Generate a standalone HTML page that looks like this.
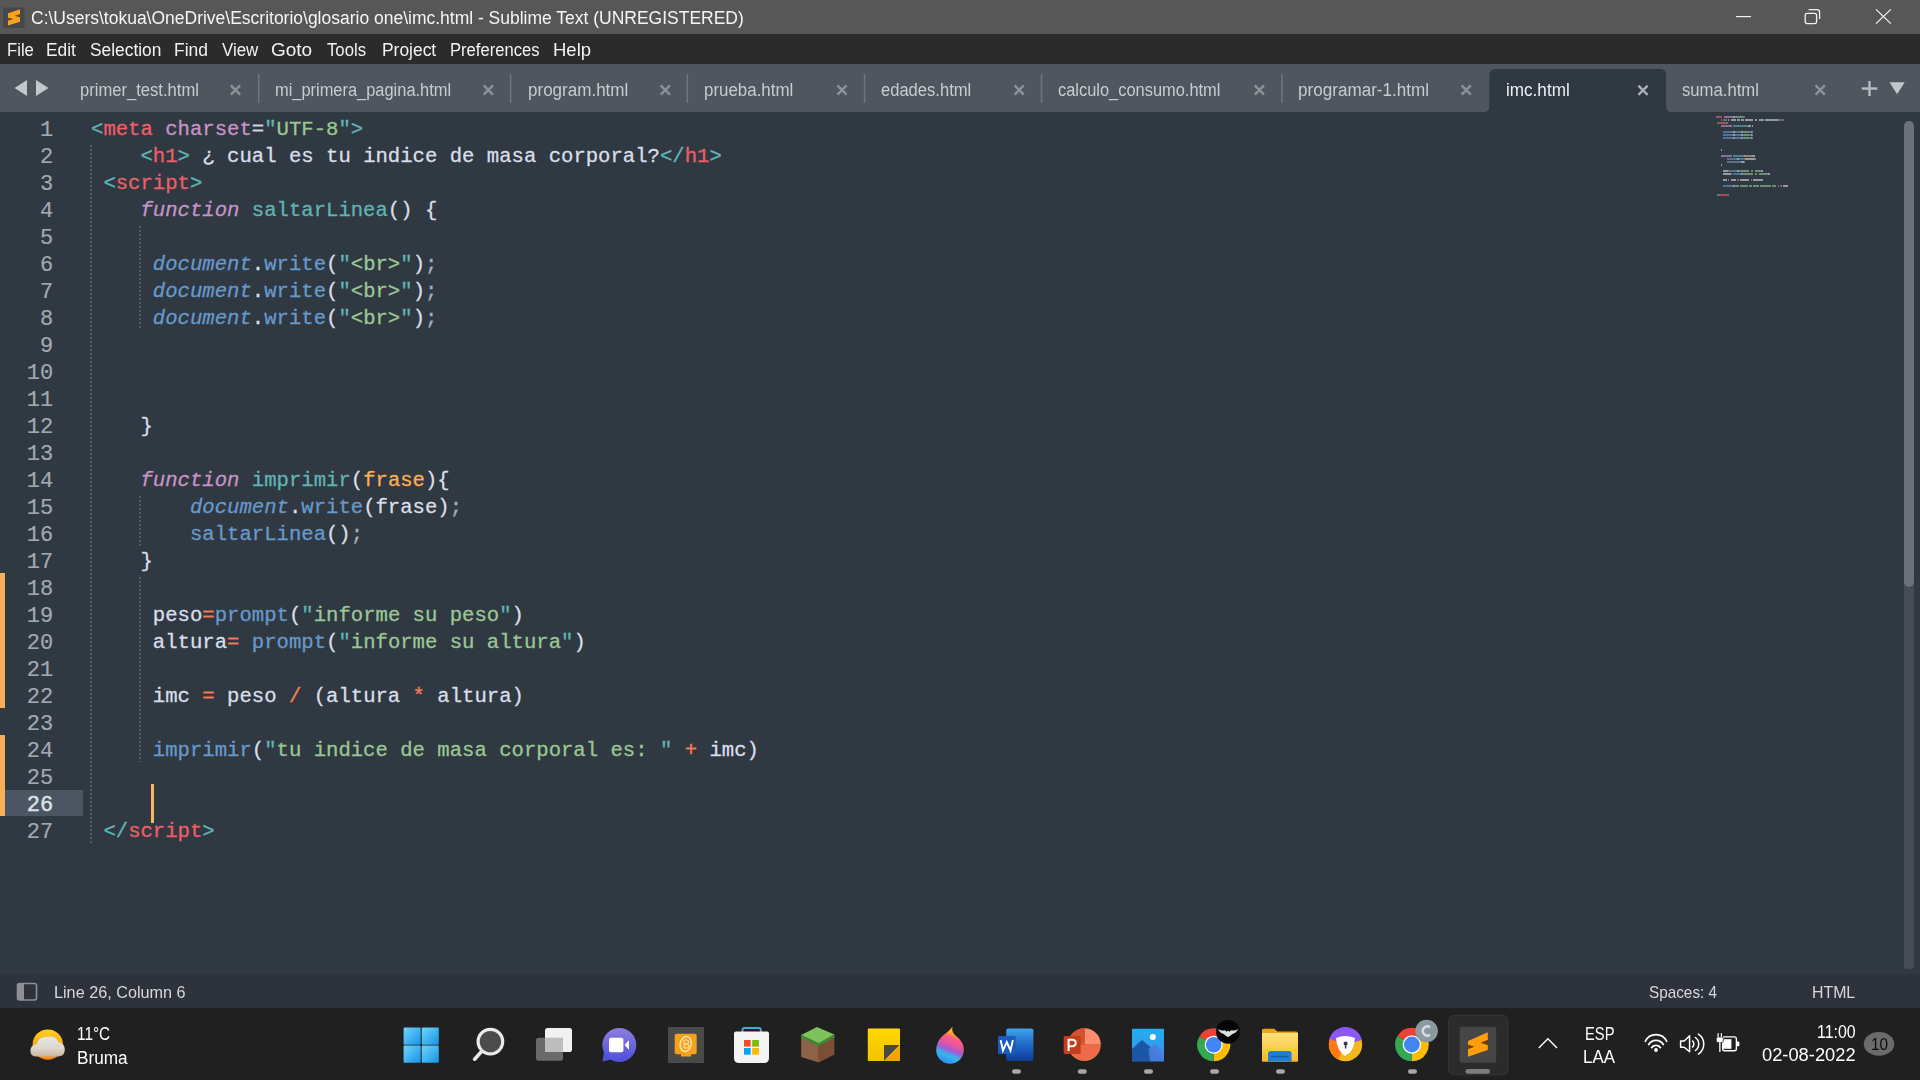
<!DOCTYPE html><html><head><meta charset="utf-8"><style>
*{margin:0;padding:0;box-sizing:border-box}
html,body{width:1920px;height:1080px;overflow:hidden;background:#303841}
body{position:relative;font-family:"Liberation Sans",sans-serif}
.a{position:absolute}
.t{position:absolute;white-space:pre;line-height:0;transform-origin:0 0}
.code{position:absolute;left:0;white-space:pre;-webkit-text-stroke:0.3px;font-family:"Liberation Mono",monospace;font-size:20.610px;line-height:27px;height:27px}
.ln{position:absolute;white-space:pre;-webkit-text-stroke:0.2px;font-family:"Liberation Mono",monospace;font-size:22.000px;line-height:27px;height:27px;text-align:right;width:60px;color:#a3a8b0}
.i{font-style:italic}
</style></head><body>
<div class="a" style="left:0;top:0;width:1920px;height:34px;background:#575757"></div>
<div class="a" style="left:0;top:34px;width:1920px;height:30px;background:#2b2b2b"></div>
<div class="a" style="left:0;top:64px;width:1920px;height:48px;background:#50565e"></div>
<div class="a" style="left:0;top:112px;width:1920px;height:862px;background:#303841"></div>
<div class="a" style="left:0;top:974px;width:1920px;height:34px;background:#2e323b"></div>
<div class="a" style="left:0;top:1008px;width:1920px;height:72px;background:#202020"></div>
<svg class="a" style="left:0;top:0" width="34" height="34" viewBox="0 0 34 34">
<rect x="3" y="7.5" width="21.5" height="20.5" rx="1" fill="#45474d"/>
<polygon points="8,13.2 20,9.2 20,14.2 15,15.8 20,17.2 20,21.8 8,25.5 8,20.5 13,19 8,17.8" fill="#f7a21b"/>
<polygon points="8,17.8 13,19 8,20.5" fill="#7a4a10"/>
<polygon points="15,15.8 20,14.2 20,17.2" fill="#7a4a10"/>
</svg>
<svg class="a" style="left:1720px;top:0" width="200" height="34" viewBox="1720 0 200 34">
<rect x="1736" y="16" width="15" height="1.2" fill="#f0f0f0"/>
<rect x="1805.2" y="13.4" width="11.4" height="10.2" rx="2" fill="none" stroke="#f0f0f0" stroke-width="1.3"/>
<path d="M1808.6 9.6 H1817 a2.6 2.6 0 0 1 2.6 2.6 V19" fill="none" stroke="#f0f0f0" stroke-width="1.3"/>
<path d="M1876 9.4 L1890.8 23.6 M1890.8 9.4 L1876 23.6" stroke="#f0f0f0" stroke-width="1.3"/>
</svg>
<svg class="a" style="left:0;top:64px" width="60" height="48" viewBox="0 64 60 48">
<polygon points="14.5,88 27,80 27,96" fill="#c3c7cc"/>
<polygon points="36,80 48.5,88 36,96" fill="#c3c7cc"/>
</svg>
<svg class="a" style="left:1478px;top:64px" width="200" height="48" viewBox="1478 64 200 48">
<path d="M1483.5 112 Q1489.4 112 1489.4 106 V75 Q1489.4 69 1495.4 69 H1660.1 Q1666.1 69 1666.1 75 V106 Q1666.1 112 1672.1 112 Z" fill="#303841"/>
</svg>
<svg class="a" style="left:0;top:64px" width="1920" height="48" viewBox="0 64 1920 48">
<path d="M230.9 85.4 L240.1 94.6 M240.1 85.4 L230.9 94.6" stroke="#8d9298" stroke-width="2.4" stroke-linecap="butt"/>
<path d="M483.7 85.4 L492.9 94.6 M492.9 85.4 L483.7 94.6" stroke="#8d9298" stroke-width="2.4" stroke-linecap="butt"/>
<path d="M660.7 85.4 L669.9 94.6 M669.9 85.4 L660.7 94.6" stroke="#8d9298" stroke-width="2.4" stroke-linecap="butt"/>
<path d="M837.4 85.4 L846.6 94.6 M846.6 85.4 L837.4 94.6" stroke="#8d9298" stroke-width="2.4" stroke-linecap="butt"/>
<path d="M1014.6 85.4 L1023.8 94.6 M1023.8 85.4 L1014.6 94.6" stroke="#8d9298" stroke-width="2.4" stroke-linecap="butt"/>
<path d="M1254.8 85.4 L1264.0 94.6 M1264.0 85.4 L1254.8 94.6" stroke="#8d9298" stroke-width="2.4" stroke-linecap="butt"/>
<path d="M1461.6 85.4 L1470.8 94.6 M1470.8 85.4 L1461.6 94.6" stroke="#8d9298" stroke-width="2.4" stroke-linecap="butt"/>
<path d="M1638.4 85.6 L1647.6 94.8 M1647.6 85.6 L1638.4 94.8" stroke="#a9aeb3" stroke-width="2.4" stroke-linecap="butt"/>
<path d="M1815.6 85.4 L1824.8 94.6 M1824.8 85.4 L1815.6 94.6" stroke="#8d9298" stroke-width="2.4" stroke-linecap="butt"/>
<rect x="257.9" y="74" width="1.6" height="29" fill="#6e747b"/>
<rect x="509.8" y="74" width="1.6" height="29" fill="#6e747b"/>
<rect x="686.5" y="74" width="1.6" height="29" fill="#6e747b"/>
<rect x="863.8" y="74" width="1.6" height="29" fill="#6e747b"/>
<rect x="1040.7" y="74" width="1.6" height="29" fill="#6e747b"/>
<rect x="1281.1" y="74" width="1.6" height="29" fill="#6e747b"/>
<rect x="1861.8" y="87.3" width="15.5" height="2.4" fill="#b8bcc1"/>
<rect x="1868.3" y="81" width="2.4" height="15" fill="#b8bcc1"/>
<polygon points="1889.5,82.3 1904.7,82.3 1897.1,94.2" fill="#c3c7cc"/>
</svg>
<svg class="a" style="left:0;top:974px" width="50" height="34" viewBox="0 974 50 34">
<rect x="17.5" y="983.5" width="19" height="16.5" rx="2" fill="none" stroke="#8c9096" stroke-width="1.6"/>
<rect x="17.5" y="983.5" width="6.5" height="16.5" fill="#8c9096"/>
</svg><svg class="a" style="left:0;top:1008px" width="1920" height="72" viewBox="0 1008 1920 72">
<defs>
<linearGradient id="gwin" x1="0" y1="0" x2="1" y2="1"><stop offset="0" stop-color="#6fd6fb"/><stop offset="1" stop-color="#1592e6"/></linearGradient>
<linearGradient id="gsun" x1="0" y1="0" x2="0" y2="1"><stop offset="0" stop-color="#ffd21f"/><stop offset=".5" stop-color="#f9a81a"/><stop offset="1" stop-color="#f08a1c"/></linearGradient>
<linearGradient id="gcloud" x1="0" y1="0" x2="0" y2="1"><stop offset="0" stop-color="#e4e8e6"/><stop offset=".6" stop-color="#dcd6cc"/><stop offset="1" stop-color="#c9b59c"/></linearGradient>
<linearGradient id="gchat" x1="0" y1="0" x2="0" y2="1"><stop offset="0" stop-color="#8c7fdc"/><stop offset="1" stop-color="#4c4fdc"/></linearGradient>
<linearGradient id="gpaint" x1=".65" y1=".02" x2=".35" y2=".98"><stop offset="0" stop-color="#ffc21a"/><stop offset=".16" stop-color="#ffb020"/><stop offset=".3" stop-color="#ff5a8a"/><stop offset=".48" stop-color="#e2559e"/><stop offset=".62" stop-color="#a15ad8"/><stop offset=".78" stop-color="#36b8ea"/><stop offset="1" stop-color="#2a8ff0"/></linearGradient>
<linearGradient id="gword" x1="0" y1="0" x2="0" y2="1"><stop offset="0" stop-color="#41a5ee"/><stop offset=".33" stop-color="#2b7cd3"/><stop offset=".66" stop-color="#185abd"/><stop offset="1" stop-color="#103f91"/></linearGradient>
<linearGradient id="gsky" x1="0" y1="0" x2="0" y2="1"><stop offset="0" stop-color="#22aef2"/><stop offset="1" stop-color="#3d8fe6"/></linearGradient>
<linearGradient id="gfold" x1="0" y1="0" x2="0" y2="1"><stop offset="0" stop-color="#ffe27a"/><stop offset="1" stop-color="#f7b92d"/></linearGradient>
<linearGradient id="gstick" x1="0" y1="0" x2="0" y2="1"><stop offset="0" stop-color="#ffd900"/><stop offset="1" stop-color="#f4c000"/></linearGradient>
</defs>
<circle cx="47.8" cy="1044.6" r="15.2" fill="url(#gsun)"/>
<path d="M30.5 1051.5 Q30 1045 36.5 1044.2 Q38.5 1036.5 47.5 1036.8 Q55 1035.5 58.5 1042 Q64.8 1043 64.8 1050 Q64.5 1056.5 58 1056.5 L36.5 1056.5 Q30.8 1056.5 30.5 1051.5 Z" fill="url(#gcloud)"/>
<rect x="403.6" y="1027.6" width="17.1" height="17.1" rx="1" fill="url(#gwin)"/>
<rect x="421.7" y="1027.6" width="17.1" height="17.1" rx="1" fill="url(#gwin)"/>
<rect x="403.6" y="1045.6" width="17.1" height="17.1" rx="1" fill="url(#gwin)"/>
<rect x="421.7" y="1045.6" width="17.1" height="17.1" rx="1" fill="url(#gwin)"/>
<circle cx="490.4" cy="1041.6" r="12.3" fill="#4b4b4b" stroke="#e9e9e9" stroke-width="3.2"/>
<line x1="474.6" y1="1059.2" x2="481.4" y2="1051.6" stroke="#e9e9e9" stroke-width="3.6" stroke-linecap="round"/>
<rect x="536" y="1037.7" width="27" height="23" rx="2.5" fill="#6a6a6a"/>
<rect x="545" y="1028" width="27" height="24" rx="2.5" fill="#f1f1f1"/>
<rect x="545" y="1037.7" width="18" height="14.3" fill="#bdbdbd"/>
<circle cx="619.3" cy="1045" r="17" fill="url(#gchat)"/>
<path d="M604 1052 L602.5 1061.5 L613 1059 Z" fill="#5055d8"/>
<rect x="609" y="1037.8" width="14.4" height="14.4" rx="2" fill="#ffffff"/>
<polygon points="624.5,1045 629,1040.3 629,1049.7" fill="#ffffff"/>
<rect x="668" y="1027" width="36" height="36" fill="#4a4a4a"/>
<rect x="674.7" y="1033.7" width="22" height="20.6" rx="2" fill="#f3a21d"/>
<rect x="681" y="1053" width="10" height="3.5" fill="#f3a21d"/>
<ellipse cx="685.7" cy="1044" rx="5.5" ry="7.5" fill="none" stroke="#ffe6b0" stroke-width="1.4" transform="rotate(12 685.7 1044)"/>
<path d="M684 1040 V1048 H687 A2 2 0 0 0 687 1044 H684 M684 1044 H686.6 A2 2 0 0 0 686.6 1040 H684" fill="none" stroke="#ffe6b0" stroke-width="1"/>
<path d="M742.5 1035 V1030 Q742.5 1028 744.5 1028 H758.8 Q760.8 1028 760.8 1030 V1035" fill="none" stroke="#4aa6d6" stroke-width="2"/>
<path d="M734 1033.6 Q734 1031.6 736 1031.6 H767 Q769 1031.6 769 1033.6 V1058 Q769 1063 764 1063 H739 Q734 1063 734 1058 Z" fill="#f3f3f3"/>
<rect x="744" y="1040" width="6.6" height="6.6" fill="#f25022"/>
<rect x="752.2" y="1040" width="6.7" height="6.6" fill="#7fba00"/>
<rect x="744" y="1048" width="6.6" height="6.7" fill="#00a4ef"/>
<rect x="752.2" y="1048" width="6.7" height="6.7" fill="#ffb900"/>
<polygon points="801.2,1035.1 801.2,1057 818.8,1062.6 818.8,1043.3" fill="#8d6246"/>
<polygon points="818.8,1043.3 818.8,1062.6 834.4,1054.5 834.4,1034.5" fill="#7a4f35"/>
<polygon points="801.2,1035.1 816.9,1027 834.4,1034.5 818.8,1043.3" fill="#7dc25a"/>
<polygon points="801.2,1035.1 818.8,1043.3 834.4,1034.5 834.4,1037.5 818.8,1046 801.2,1038" fill="#3d8a33"/>
<rect x="867.8" y="1028.6" width="32.2" height="32.4" rx="1" fill="url(#gstick)"/>
<polygon points="884,1045 899.5,1045 884,1060.8" fill="#484848"/>
<polygon points="899.8,1045.5 899.8,1061 884.5,1061" fill="#f0a500"/>
<path d="M952.5 1026.6 Q951 1032 956 1036 Q964 1042 963.8 1050 A13.8 13.8 0 0 1 936.2 1050 Q936.5 1041 943 1035.5 Q950 1030.5 952.5 1026.6 Z" fill="url(#gpaint)"/>
<rect x="1006.2" y="1028.4" width="27.2" height="32.6" rx="2" fill="url(#gword)"/>
<rect x="998" y="1036" width="17.6" height="18" rx="1.2" fill="#185abd"/>
<path d="M1000.6 1040 L1003 1050.5 L1006.8 1042 L1010.5 1050.5 L1012.9 1040" fill="none" stroke="#ffffff" stroke-width="1.9" stroke-linejoin="miter"/>
<path d="M1084.4 1044.7 L1084.4 1028.3 A16.4 16.4 0 0 1 1100.8 1044.7 Z" fill="#ff8f6b"/>
<path d="M1084.4 1044.7 L1100.8 1044.7 A16.4 16.4 0 0 1 1068 1044.7 A16.4 16.4 0 0 1 1084.4 1028.3 Z" fill="#ed6c47"/>
<path d="M1084.4 1028.3 A16.4 16.4 0 0 0 1068 1044.7 L1084.4 1044.7 Z" fill="#d35230"/>
<rect x="1063.7" y="1036" width="17" height="18" rx="1.2" fill="#c43e1c"/>
<path d="M1068.6 1051 V1039.8 H1072.6 A3.2 3.2 0 0 1 1072.6 1046.2 H1068.6" fill="none" stroke="#ffffff" stroke-width="2"/>
<rect x="1132" y="1028.7" width="32" height="32.6" rx="1" fill="url(#gsky)"/>
<polygon points="1142,1040 1132,1049 1132,1061.3 1164,1061.3 1156,1052" fill="#1d56a6"/>
<polygon points="1155,1044 1164,1052 1164,1061.3 1150,1061.3 1148.5,1049" fill="#4a7fe0" opacity=".9"/>
<circle cx="1152.8" cy="1036.9" r="3" fill="#ffffff"/>
<path d="M1213.70 1044.70 L1199.41 1036.45 A16.50 16.50 0 0 1 1227.99 1036.45 Z" fill="#ea4335"/>
<path d="M1213.70 1044.70 L1227.99 1036.45 A16.50 16.50 0 0 1 1213.70 1061.20 Z" fill="#fbbc04"/>
<path d="M1213.70 1044.70 L1213.70 1061.20 A16.50 16.50 0 0 1 1199.41 1036.45 Z" fill="#34a853"/>
<circle cx="1213.70" cy="1044.70" r="9.05" fill="#ffffff"/>
<circle cx="1213.70" cy="1044.70" r="7.75" fill="#4285f4"/>
<circle cx="1228" cy="1031.9" r="11.9" fill="#050505"/>
<path d="M1217.8 1029 Q1222 1031.2 1224.8 1030.2 L1226.6 1031.8 L1228 1030.6 L1229.4 1031.8 L1231.2 1030.2 Q1234 1031.2 1238.4 1029 Q1236 1033.2 1232.8 1033.8 L1228 1037.2 L1223.2 1033.8 Q1220 1033.2 1217.8 1029 Z" fill="#e0e0e0"/>
<path d="M1262 1030.5 Q1262 1028.7 1263.8 1028.7 H1274 L1277.5 1031.5 H1296 Q1298 1031.5 1298 1033.5 V1061.6 H1262 Z" fill="#e9a61a"/>
<rect x="1262" y="1033" width="36" height="28.6" rx="1" fill="url(#gfold)"/>
<path d="M1268 1061.6 V1053.5 Q1268 1051 1270.5 1051 H1289 Q1291.6 1051 1291.6 1053.5 V1061.6 Z" fill="#1f7fd6"/>
<rect x="1271" y="1055.8" width="17.6" height="1.6" fill="#0f5fae"/>
<circle cx="1345.5" cy="1044.5" r="16.7" fill="#f5b81c"/>
<path d="M1345.5 1044.5 L1329 1041 A16.7 16.7 0 0 1 1361.8 1040 Z" fill="#8b57f5"/>
<path d="M1345.5 1044.5 L1330 1039 A16.7 16.7 0 0 0 1338 1059.5 Z" fill="#ff7a12"/>
<path d="M1336 1038 Q1345 1034 1355 1038 Q1354 1052 1345 1056 Q1337 1051 1336 1038 Z" fill="#ffffff"/>
<circle cx="1345.6" cy="1043.5" r="2" fill="#3a3a5a"/><rect x="1344.8" y="1044" width="1.6" height="4.5" fill="#3a3a5a"/>
<path d="M1411.90 1044.50 L1397.35 1036.10 A16.80 16.80 0 0 1 1426.45 1036.10 Z" fill="#ea4335"/>
<path d="M1411.90 1044.50 L1426.45 1036.10 A16.80 16.80 0 0 1 1411.90 1061.30 Z" fill="#fbbc04"/>
<path d="M1411.90 1044.50 L1411.90 1061.30 A16.80 16.80 0 0 1 1397.35 1036.10 Z" fill="#34a853"/>
<circle cx="1411.90" cy="1044.50" r="9.20" fill="#ffffff"/>
<circle cx="1411.90" cy="1044.50" r="7.90" fill="#4285f4"/>
<circle cx="1426.6" cy="1031" r="11.3" fill="#8b99a1"/>
<path d="M1430 1027.2 A4.6 4.6 0 1 0 1430 1034.8" fill="none" stroke="#d5e0e5" stroke-width="2.4"/>
<rect x="1448.5" y="1015.3" width="59.5" height="59.5" rx="5" fill="#2b2b2b" stroke="#353535" stroke-width="1"/>
<rect x="1459.7" y="1026.8" width="36.5" height="36" rx="2" fill="#464646"/>
<polygon points="1468,1041 1487.8,1032.2 1487.8,1040 1481,1042.8 1487.8,1045 1487.8,1050 1468,1056.7 1468,1049 1474,1046.8 1468,1044.8" fill="#ff9d0a"/>
<polygon points="1468,1044.8 1474,1046.8 1468,1049" fill="#6a3f08"/>
<polygon points="1481,1042.8 1487.8,1040 1487.8,1045" fill="#6a3f08"/>
<rect x="1465.5" y="1069" width="24.5" height="4.8" rx="2.4" fill="#7d7d7d"/>
<rect x="1012.0" y="1069.2" width="9" height="4.6" rx="2.3" fill="#a8a8a8"/>
<rect x="1077.8" y="1069.2" width="9" height="4.6" rx="2.3" fill="#a8a8a8"/>
<rect x="1144.0" y="1069.2" width="9" height="4.6" rx="2.3" fill="#a8a8a8"/>
<rect x="1210.0" y="1069.2" width="9" height="4.6" rx="2.3" fill="#a8a8a8"/>
<rect x="1276.0" y="1069.2" width="9" height="4.6" rx="2.3" fill="#a8a8a8"/>
<rect x="1408.0" y="1069.2" width="9" height="4.6" rx="2.3" fill="#a8a8a8"/>
<polyline points="1538.8,1047.9 1547.9,1038.8 1557,1047.9" fill="none" stroke="#ffffff" stroke-width="1.4"/>
<path d="M1645.3 1041.3 A11.9 11.9 0 0 1 1666.7 1041.3" fill="none" stroke="#ffffff" stroke-width="1.7" stroke-linecap="round"/>
<path d="M1648.6 1044.6 A8.6 8.6 0 0 1 1663.4 1044.6" fill="none" stroke="#ffffff" stroke-width="1.7" stroke-linecap="round"/>
<path d="M1651.6 1047.6 A5.6 5.6 0 0 1 1660.4 1047.6" fill="none" stroke="#ffffff" stroke-width="1.7" stroke-linecap="round"/>
<circle cx="1656" cy="1050" r="1.9" fill="#ffffff"/>
<path d="M1680.6 1041 H1684.2 L1689.6 1035.8 V1051.8 L1684.2 1047.2 H1680.6 Z" fill="none" stroke="#ffffff" stroke-width="1.5" stroke-linejoin="round"/>
<path d="M1692.6 1041 A4.2 4.2 0 0 1 1692.6 1047" fill="none" stroke="#ffffff" stroke-width="1.5" stroke-linecap="round"/>
<path d="M1695.4 1037.5 A8 8 0 0 1 1695.4 1050.5" fill="none" stroke="#ffffff" stroke-width="1.5" stroke-linecap="round"/>
<path d="M1698.4 1034 A12 12 0 0 1 1698.4 1054" fill="none" stroke="#ffffff" stroke-width="1.5" stroke-linecap="round"/>
<rect x="1722.6" y="1036.9" width="13.8" height="13.8" rx="2" fill="none" stroke="#ffffff" stroke-width="1.4"/>
<rect x="1736.4" y="1041.6" width="3" height="4.6" rx="1" fill="#ffffff"/>
<rect x="1723" y="1039.2" width="8.4" height="9.6" fill="#ffffff"/>
<rect x="1716.3" y="1037" width="7" height="5.5" rx="1.5" fill="#ffffff" stroke="#202020" stroke-width="0.8"/>
<rect x="1717.5" y="1033.2" width="1.2" height="4" fill="#ffffff"/><rect x="1720.8" y="1033.2" width="1.2" height="4" fill="#ffffff"/>
<rect x="1719.2" y="1042" width="1.3" height="10" fill="#ffffff"/>
<ellipse cx="1879" cy="1043.9" rx="15.2" ry="11.9" fill="#6b6b6b"/>
</svg>
<div class="t" style="left:31.03px;top:18.20px;font-size:18.00px;color:#f4f4f4;transform:scaleX(0.9713)">C:\Users\tokua\OneDrive\Escritorio\glosario one\imc.html - Sublime Text (UNREGISTERED)</div>
<div class="t" style="left:6.87px;top:49.50px;font-size:18.00px;color:#f2f2f2;transform:scaleX(0.9259)">File</div>
<div class="t" style="left:45.94px;top:49.50px;font-size:18.00px;color:#f2f2f2;transform:scaleX(0.9633)">Edit</div>
<div class="t" style="left:89.64px;top:49.50px;font-size:18.00px;color:#f2f2f2;transform:scaleX(0.9639)">Selection</div>
<div class="t" style="left:174.03px;top:49.50px;font-size:18.00px;color:#f2f2f2;transform:scaleX(0.9697)">Find</div>
<div class="t" style="left:222.00px;top:49.50px;font-size:18.00px;color:#f2f2f2;transform:scaleX(0.9385)">View</div>
<div class="t" style="left:271.35px;top:49.50px;font-size:18.00px;color:#f2f2f2;transform:scaleX(1.0541)">Goto</div>
<div class="t" style="left:327.30px;top:49.50px;font-size:18.00px;color:#f2f2f2;transform:scaleX(0.9286)">Tools</div>
<div class="t" style="left:382.03px;top:49.50px;font-size:18.00px;color:#f2f2f2;transform:scaleX(0.9673)">Project</div>
<div class="t" style="left:449.98px;top:49.50px;font-size:18.00px;color:#f2f2f2;transform:scaleX(0.9219)">Preferences</div>
<div class="t" style="left:553.27px;top:49.50px;font-size:18.00px;color:#f2f2f2;transform:scaleX(1.0286)">Help</div>
<div class="t" style="left:79.58px;top:90.00px;font-size:18.00px;color:#c8ccd1;transform:scaleX(0.9213)">primer_test.html</div>
<div class="t" style="left:275.29px;top:90.00px;font-size:18.00px;color:#c8ccd1;transform:scaleX(0.9120)">mi_primera_pagina.html</div>
<div class="t" style="left:527.95px;top:90.00px;font-size:18.00px;color:#c8ccd1;transform:scaleX(0.9462)">program.html</div>
<div class="t" style="left:704.26px;top:90.00px;font-size:18.00px;color:#c8ccd1;transform:scaleX(0.9398)">prueba.html</div>
<div class="t" style="left:881.28px;top:90.00px;font-size:18.00px;color:#c8ccd1;transform:scaleX(0.9198)">edades.html</div>
<div class="t" style="left:1058.09px;top:90.00px;font-size:18.00px;color:#c8ccd1;transform:scaleX(0.9119)">calculo_consumo.html</div>
<div class="t" style="left:1298.25px;top:90.00px;font-size:18.00px;color:#c8ccd1;transform:scaleX(0.9493)">programar-1.html</div>
<div class="t" style="left:1505.55px;top:90.00px;font-size:18.00px;color:#eef0f3;transform:scaleX(0.9508)">imc.html</div>
<div class="t" style="left:1682.37px;top:90.00px;font-size:18.00px;color:#c8ccd1;transform:scaleX(0.9259)">suma.html</div>
<div class="t" style="left:53.75px;top:993.00px;font-size:17.00px;color:#d4d7db;transform:scaleX(0.9537)">Line 26, Column 6</div>
<div class="t" style="left:1648.60px;top:993.00px;font-size:17.00px;color:#d4d7db;transform:scaleX(0.9000)">Spaces: 4</div>
<div class="t" style="left:1812.07px;top:993.00px;font-size:17.00px;color:#d4d7db;transform:scaleX(0.9333)">HTML</div>
<div class="t" style="left:77.03px;top:1033.80px;font-size:17.50px;color:#ffffff;transform:scaleX(0.8750)">11°C</div>
<div class="t" style="left:76.92px;top:1057.80px;font-size:17.50px;color:#ffffff;transform:scaleX(0.9824)">Bruma</div>
<div class="t" style="left:1584.66px;top:1033.80px;font-size:17.50px;color:#ffffff;transform:scaleX(0.8424)">ESP</div>
<div class="t" style="left:1583.43px;top:1056.80px;font-size:17.50px;color:#ffffff;transform:scaleX(0.9656)">LAA</div>
<div class="t" style="left:1816.79px;top:1032.40px;font-size:17.50px;color:#ffffff;transform:scaleX(0.9098)">11:00</div>
<div class="t" style="left:1761.95px;top:1055.40px;font-size:17.50px;color:#ffffff;transform:scaleX(1.0455)">02-08-2022</div>
<div class="t" style="left:1870.74px;top:1044.60px;font-size:16.00px;color:#0c0c0c;transform:scaleX(0.9562)">10</div>
<div class="a" style="left:0;top:573px;width:5px;height:135px;background:#f9ae58"></div>
<div class="a" style="left:0;top:735px;width:5px;height:81px;background:#f9ae58"></div>
<div class="a" style="left:5px;top:790px;width:78px;height:26px;background:#4b5662"></div>
<div class="ln" style="left:-6.80px;top:117.00px;color:#a3a8b0;">1</div>
<div class="ln" style="left:-6.80px;top:144.00px;color:#a3a8b0;">2</div>
<div class="ln" style="left:-6.80px;top:171.00px;color:#a3a8b0;">3</div>
<div class="ln" style="left:-6.80px;top:198.00px;color:#a3a8b0;">4</div>
<div class="ln" style="left:-6.80px;top:225.00px;color:#a3a8b0;">5</div>
<div class="ln" style="left:-6.80px;top:252.00px;color:#a3a8b0;">6</div>
<div class="ln" style="left:-6.80px;top:279.00px;color:#a3a8b0;">7</div>
<div class="ln" style="left:-6.80px;top:306.00px;color:#a3a8b0;">8</div>
<div class="ln" style="left:-6.80px;top:333.00px;color:#a3a8b0;">9</div>
<div class="ln" style="left:-6.80px;top:360.00px;color:#a3a8b0;">10</div>
<div class="ln" style="left:-6.80px;top:387.00px;color:#a3a8b0;">11</div>
<div class="ln" style="left:-6.80px;top:414.00px;color:#a3a8b0;">12</div>
<div class="ln" style="left:-6.80px;top:441.00px;color:#a3a8b0;">13</div>
<div class="ln" style="left:-6.80px;top:468.00px;color:#a3a8b0;">14</div>
<div class="ln" style="left:-6.80px;top:495.00px;color:#a3a8b0;">15</div>
<div class="ln" style="left:-6.80px;top:522.00px;color:#a3a8b0;">16</div>
<div class="ln" style="left:-6.80px;top:549.00px;color:#a3a8b0;">17</div>
<div class="ln" style="left:-6.80px;top:576.00px;color:#a3a8b0;">18</div>
<div class="ln" style="left:-6.80px;top:603.00px;color:#a3a8b0;">19</div>
<div class="ln" style="left:-6.80px;top:630.00px;color:#a3a8b0;">20</div>
<div class="ln" style="left:-6.80px;top:657.00px;color:#a3a8b0;">21</div>
<div class="ln" style="left:-6.80px;top:684.00px;color:#a3a8b0;">22</div>
<div class="ln" style="left:-6.80px;top:711.00px;color:#a3a8b0;">23</div>
<div class="ln" style="left:-6.80px;top:738.00px;color:#a3a8b0;">24</div>
<div class="ln" style="left:-6.80px;top:765.00px;color:#a3a8b0;">25</div>
<div class="ln" style="left:-6.80px;top:792.00px;color:#dde1e6;-webkit-text-stroke:0.45px;">26</div>
<div class="ln" style="left:-6.80px;top:819.00px;color:#a3a8b0;">27</div>
<div class="a" style="left:90px;top:145px;width:2px;height:698px;background:repeating-linear-gradient(to bottom,#535b66 0,#535b66 2px,transparent 2px,transparent 4px)"></div>
<div class="a" style="left:139px;top:226px;width:2px;height:104px;background:repeating-linear-gradient(to bottom,#535b66 0,#535b66 2px,transparent 2px,transparent 4px)"></div>
<div class="a" style="left:139px;top:496px;width:2px;height:50px;background:repeating-linear-gradient(to bottom,#535b66 0,#535b66 2px,transparent 2px,transparent 4px)"></div>
<div class="a" style="left:139px;top:577px;width:2px;height:185px;background:repeating-linear-gradient(to bottom,#535b66 0,#535b66 2px,transparent 2px,transparent 4px)"></div>
<div class="code" style="left:91.00px;top:115.66px"><span style="color:#5fb4b4">&lt;</span><span style="color:#ec5f67">meta</span><span style="color:#d8dee9"> </span><span style="color:#c594c5">charset</span><span style="color:#d8dee9">=</span><span style="color:#5fb4b4">&quot;</span><span style="color:#99c794">UTF-8</span><span style="color:#5fb4b4">&quot;</span><span style="color:#5fb4b4">&gt;</span></div>
<div class="code" style="left:91.00px;top:142.66px"><span style="color:#d8dee9">    </span><span style="color:#5fb4b4">&lt;</span><span style="color:#ec5f67">h1</span><span style="color:#5fb4b4">&gt;</span><span style="color:#d8dee9"> ¿ cual es tu indice de masa corporal?</span><span style="color:#5fb4b4">&lt;/</span><span style="color:#ec5f67">h1</span><span style="color:#5fb4b4">&gt;</span></div>
<div class="code" style="left:91.00px;top:169.66px"><span style="color:#d8dee9"> </span><span style="color:#5fb4b4">&lt;</span><span style="color:#ec5f67">script</span><span style="color:#5fb4b4">&gt;</span></div>
<div class="code" style="left:91.00px;top:196.66px"><span style="color:#d8dee9">    </span><span style="color:#c594c5" class="i">function</span><span style="color:#d8dee9"> </span><span style="color:#5fb4b4">saltarLinea</span><span style="color:#d8dee9">() {</span></div>
<div class="code" style="left:91.00px;top:223.66px"></div>
<div class="code" style="left:91.00px;top:250.66px"><span style="color:#d8dee9">     </span><span style="color:#6699cc" class="i">document</span><span style="color:#d8dee9">.</span><span style="color:#6699cc">write</span><span style="color:#d8dee9">(</span><span style="color:#5fb4b4">&quot;</span><span style="color:#99c794">&lt;br&gt;</span><span style="color:#5fb4b4">&quot;</span><span style="color:#d8dee9">)</span><span style="color:#a6acb9">;</span></div>
<div class="code" style="left:91.00px;top:277.66px"><span style="color:#d8dee9">     </span><span style="color:#6699cc" class="i">document</span><span style="color:#d8dee9">.</span><span style="color:#6699cc">write</span><span style="color:#d8dee9">(</span><span style="color:#5fb4b4">&quot;</span><span style="color:#99c794">&lt;br&gt;</span><span style="color:#5fb4b4">&quot;</span><span style="color:#d8dee9">)</span><span style="color:#a6acb9">;</span></div>
<div class="code" style="left:91.00px;top:304.66px"><span style="color:#d8dee9">     </span><span style="color:#6699cc" class="i">document</span><span style="color:#d8dee9">.</span><span style="color:#6699cc">write</span><span style="color:#d8dee9">(</span><span style="color:#5fb4b4">&quot;</span><span style="color:#99c794">&lt;br&gt;</span><span style="color:#5fb4b4">&quot;</span><span style="color:#d8dee9">)</span><span style="color:#a6acb9">;</span></div>
<div class="code" style="left:91.00px;top:331.66px"></div>
<div class="code" style="left:91.00px;top:358.66px"></div>
<div class="code" style="left:91.00px;top:385.66px"></div>
<div class="code" style="left:91.00px;top:412.66px"><span style="color:#d8dee9">    </span><span style="color:#d8dee9">}</span></div>
<div class="code" style="left:91.00px;top:439.66px"></div>
<div class="code" style="left:91.00px;top:466.66px"><span style="color:#d8dee9">    </span><span style="color:#c594c5" class="i">function</span><span style="color:#d8dee9"> </span><span style="color:#5fb4b4">imprimir</span><span style="color:#d8dee9">(</span><span style="color:#f9ae58">frase</span><span style="color:#d8dee9">){</span></div>
<div class="code" style="left:91.00px;top:493.66px"><span style="color:#d8dee9">        </span><span style="color:#6699cc" class="i">document</span><span style="color:#d8dee9">.</span><span style="color:#6699cc">write</span><span style="color:#d8dee9">(frase)</span><span style="color:#a6acb9">;</span></div>
<div class="code" style="left:91.00px;top:520.66px"><span style="color:#d8dee9">        </span><span style="color:#6699cc">saltarLinea</span><span style="color:#d8dee9">()</span><span style="color:#a6acb9">;</span></div>
<div class="code" style="left:91.00px;top:547.66px"><span style="color:#d8dee9">    </span><span style="color:#d8dee9">}</span></div>
<div class="code" style="left:91.00px;top:574.66px"></div>
<div class="code" style="left:91.00px;top:601.66px"><span style="color:#d8dee9">     </span><span style="color:#d8dee9">peso</span><span style="color:#f97b58">=</span><span style="color:#6699cc">prompt</span><span style="color:#d8dee9">(</span><span style="color:#5fb4b4">&quot;</span><span style="color:#99c794">informe su peso</span><span style="color:#5fb4b4">&quot;</span><span style="color:#d8dee9">)</span></div>
<div class="code" style="left:91.00px;top:628.66px"><span style="color:#d8dee9">     </span><span style="color:#d8dee9">altura</span><span style="color:#f97b58">=</span><span style="color:#d8dee9"> </span><span style="color:#6699cc">prompt</span><span style="color:#d8dee9">(</span><span style="color:#5fb4b4">&quot;</span><span style="color:#99c794">informe su altura</span><span style="color:#5fb4b4">&quot;</span><span style="color:#d8dee9">)</span></div>
<div class="code" style="left:91.00px;top:655.66px"></div>
<div class="code" style="left:91.00px;top:682.66px"><span style="color:#d8dee9">     </span><span style="color:#d8dee9">imc </span><span style="color:#f97b58">=</span><span style="color:#d8dee9"> peso </span><span style="color:#f97b58">/</span><span style="color:#d8dee9"> (altura </span><span style="color:#f97b58">*</span><span style="color:#d8dee9"> altura)</span></div>
<div class="code" style="left:91.00px;top:709.66px"></div>
<div class="code" style="left:91.00px;top:736.66px"><span style="color:#d8dee9">     </span><span style="color:#6699cc">imprimir</span><span style="color:#d8dee9">(</span><span style="color:#5fb4b4">&quot;</span><span style="color:#99c794">tu indice de masa corporal es: </span><span style="color:#5fb4b4">&quot;</span><span style="color:#d8dee9"> </span><span style="color:#f97b58">+</span><span style="color:#d8dee9"> imc)</span></div>
<div class="code" style="left:91.00px;top:763.66px"></div>
<div class="code" style="left:91.00px;top:790.66px"></div>
<div class="code" style="left:91.00px;top:817.66px"><span style="color:#d8dee9"> </span><span style="color:#5fb4b4">&lt;/</span><span style="color:#ec5f67">script</span><span style="color:#5fb4b4">&gt;</span></div>
<div class="a" style="left:151px;top:784px;width:3px;height:39px;background:#f5b862"></div>
<div class="a" style="left:0;top:0;width:1920px;height:1080px;filter:blur(0.35px)">
<div class="a" style="left:1715.80px;top:115.50px;width:1.34px;height:2px;background:#5fb4b4;opacity:.6"></div>
<div class="a" style="left:1717.14px;top:115.50px;width:5.37px;height:2px;background:#ec5f67;opacity:.6"></div>
<div class="a" style="left:1723.86px;top:115.50px;width:9.40px;height:2px;background:#c594c5;opacity:.6"></div>
<div class="a" style="left:1733.26px;top:115.50px;width:1.34px;height:2px;background:#d8dee9;opacity:.6"></div>
<div class="a" style="left:1734.60px;top:115.50px;width:1.34px;height:2px;background:#5fb4b4;opacity:.6"></div>
<div class="a" style="left:1735.94px;top:115.50px;width:6.71px;height:2px;background:#99c794;opacity:.6"></div>
<div class="a" style="left:1742.66px;top:115.50px;width:1.34px;height:2px;background:#5fb4b4;opacity:.6"></div>
<div class="a" style="left:1744.00px;top:115.50px;width:1.34px;height:2px;background:#5fb4b4;opacity:.6"></div>
<div class="a" style="left:1721.17px;top:118.50px;width:1.34px;height:2px;background:#5fb4b4;opacity:.6"></div>
<div class="a" style="left:1722.51px;top:118.50px;width:2.69px;height:2px;background:#ec5f67;opacity:.6"></div>
<div class="a" style="left:1725.20px;top:118.50px;width:1.34px;height:2px;background:#5fb4b4;opacity:.6"></div>
<div class="a" style="left:1727.89px;top:118.50px;width:1.34px;height:2px;background:#d8dee9;opacity:.6"></div>
<div class="a" style="left:1730.57px;top:118.50px;width:5.37px;height:2px;background:#d8dee9;opacity:.6"></div>
<div class="a" style="left:1737.29px;top:118.50px;width:2.69px;height:2px;background:#d8dee9;opacity:.6"></div>
<div class="a" style="left:1741.32px;top:118.50px;width:2.69px;height:2px;background:#d8dee9;opacity:.6"></div>
<div class="a" style="left:1745.35px;top:118.50px;width:8.06px;height:2px;background:#d8dee9;opacity:.6"></div>
<div class="a" style="left:1754.75px;top:118.50px;width:2.69px;height:2px;background:#d8dee9;opacity:.6"></div>
<div class="a" style="left:1758.78px;top:118.50px;width:5.37px;height:2px;background:#d8dee9;opacity:.6"></div>
<div class="a" style="left:1765.49px;top:118.50px;width:12.09px;height:2px;background:#d8dee9;opacity:.6"></div>
<div class="a" style="left:1777.58px;top:118.50px;width:2.69px;height:2px;background:#5fb4b4;opacity:.6"></div>
<div class="a" style="left:1780.26px;top:118.50px;width:2.69px;height:2px;background:#ec5f67;opacity:.6"></div>
<div class="a" style="left:1782.95px;top:118.50px;width:1.34px;height:2px;background:#5fb4b4;opacity:.6"></div>
<div class="a" style="left:1717.14px;top:121.50px;width:1.34px;height:2px;background:#5fb4b4;opacity:.6"></div>
<div class="a" style="left:1718.49px;top:121.50px;width:8.06px;height:2px;background:#ec5f67;opacity:.6"></div>
<div class="a" style="left:1726.54px;top:121.50px;width:1.34px;height:2px;background:#5fb4b4;opacity:.6"></div>
<div class="a" style="left:1721.17px;top:124.50px;width:10.74px;height:2px;background:#c594c5;opacity:.6"></div>
<div class="a" style="left:1733.26px;top:124.50px;width:14.77px;height:2px;background:#5fb4b4;opacity:.6"></div>
<div class="a" style="left:1748.03px;top:124.50px;width:2.69px;height:2px;background:#d8dee9;opacity:.6"></div>
<div class="a" style="left:1752.06px;top:124.50px;width:1.34px;height:2px;background:#d8dee9;opacity:.6"></div>
<div class="a" style="left:1722.51px;top:130.50px;width:10.74px;height:2px;background:#6699cc;opacity:.6"></div>
<div class="a" style="left:1733.26px;top:130.50px;width:1.34px;height:2px;background:#d8dee9;opacity:.6"></div>
<div class="a" style="left:1734.60px;top:130.50px;width:6.71px;height:2px;background:#6699cc;opacity:.6"></div>
<div class="a" style="left:1741.32px;top:130.50px;width:1.34px;height:2px;background:#d8dee9;opacity:.6"></div>
<div class="a" style="left:1742.66px;top:130.50px;width:1.34px;height:2px;background:#5fb4b4;opacity:.6"></div>
<div class="a" style="left:1744.00px;top:130.50px;width:5.37px;height:2px;background:#99c794;opacity:.6"></div>
<div class="a" style="left:1749.38px;top:130.50px;width:1.34px;height:2px;background:#5fb4b4;opacity:.6"></div>
<div class="a" style="left:1750.72px;top:130.50px;width:1.34px;height:2px;background:#d8dee9;opacity:.6"></div>
<div class="a" style="left:1752.06px;top:130.50px;width:1.34px;height:2px;background:#a6acb9;opacity:.6"></div>
<div class="a" style="left:1722.51px;top:133.50px;width:10.74px;height:2px;background:#6699cc;opacity:.6"></div>
<div class="a" style="left:1733.26px;top:133.50px;width:1.34px;height:2px;background:#d8dee9;opacity:.6"></div>
<div class="a" style="left:1734.60px;top:133.50px;width:6.71px;height:2px;background:#6699cc;opacity:.6"></div>
<div class="a" style="left:1741.32px;top:133.50px;width:1.34px;height:2px;background:#d8dee9;opacity:.6"></div>
<div class="a" style="left:1742.66px;top:133.50px;width:1.34px;height:2px;background:#5fb4b4;opacity:.6"></div>
<div class="a" style="left:1744.00px;top:133.50px;width:5.37px;height:2px;background:#99c794;opacity:.6"></div>
<div class="a" style="left:1749.38px;top:133.50px;width:1.34px;height:2px;background:#5fb4b4;opacity:.6"></div>
<div class="a" style="left:1750.72px;top:133.50px;width:1.34px;height:2px;background:#d8dee9;opacity:.6"></div>
<div class="a" style="left:1752.06px;top:133.50px;width:1.34px;height:2px;background:#a6acb9;opacity:.6"></div>
<div class="a" style="left:1722.51px;top:136.50px;width:10.74px;height:2px;background:#6699cc;opacity:.6"></div>
<div class="a" style="left:1733.26px;top:136.50px;width:1.34px;height:2px;background:#d8dee9;opacity:.6"></div>
<div class="a" style="left:1734.60px;top:136.50px;width:6.71px;height:2px;background:#6699cc;opacity:.6"></div>
<div class="a" style="left:1741.32px;top:136.50px;width:1.34px;height:2px;background:#d8dee9;opacity:.6"></div>
<div class="a" style="left:1742.66px;top:136.50px;width:1.34px;height:2px;background:#5fb4b4;opacity:.6"></div>
<div class="a" style="left:1744.00px;top:136.50px;width:5.37px;height:2px;background:#99c794;opacity:.6"></div>
<div class="a" style="left:1749.38px;top:136.50px;width:1.34px;height:2px;background:#5fb4b4;opacity:.6"></div>
<div class="a" style="left:1750.72px;top:136.50px;width:1.34px;height:2px;background:#d8dee9;opacity:.6"></div>
<div class="a" style="left:1752.06px;top:136.50px;width:1.34px;height:2px;background:#a6acb9;opacity:.6"></div>
<div class="a" style="left:1721.17px;top:148.50px;width:1.34px;height:2px;background:#d8dee9;opacity:.6"></div>
<div class="a" style="left:1721.17px;top:154.50px;width:10.74px;height:2px;background:#c594c5;opacity:.6"></div>
<div class="a" style="left:1733.26px;top:154.50px;width:10.74px;height:2px;background:#5fb4b4;opacity:.6"></div>
<div class="a" style="left:1744.00px;top:154.50px;width:1.34px;height:2px;background:#d8dee9;opacity:.6"></div>
<div class="a" style="left:1745.35px;top:154.50px;width:6.71px;height:2px;background:#f9ae58;opacity:.6"></div>
<div class="a" style="left:1752.06px;top:154.50px;width:2.69px;height:2px;background:#d8dee9;opacity:.6"></div>
<div class="a" style="left:1726.54px;top:157.50px;width:10.74px;height:2px;background:#6699cc;opacity:.6"></div>
<div class="a" style="left:1737.29px;top:157.50px;width:1.34px;height:2px;background:#d8dee9;opacity:.6"></div>
<div class="a" style="left:1738.63px;top:157.50px;width:6.71px;height:2px;background:#6699cc;opacity:.6"></div>
<div class="a" style="left:1745.35px;top:157.50px;width:9.40px;height:2px;background:#d8dee9;opacity:.6"></div>
<div class="a" style="left:1754.75px;top:157.50px;width:1.34px;height:2px;background:#a6acb9;opacity:.6"></div>
<div class="a" style="left:1726.54px;top:160.50px;width:14.77px;height:2px;background:#6699cc;opacity:.6"></div>
<div class="a" style="left:1741.32px;top:160.50px;width:2.69px;height:2px;background:#d8dee9;opacity:.6"></div>
<div class="a" style="left:1744.00px;top:160.50px;width:1.34px;height:2px;background:#a6acb9;opacity:.6"></div>
<div class="a" style="left:1721.17px;top:163.50px;width:1.34px;height:2px;background:#d8dee9;opacity:.6"></div>
<div class="a" style="left:1722.51px;top:169.50px;width:5.37px;height:2px;background:#d8dee9;opacity:.6"></div>
<div class="a" style="left:1727.89px;top:169.50px;width:1.34px;height:2px;background:#f97b58;opacity:.6"></div>
<div class="a" style="left:1729.23px;top:169.50px;width:8.06px;height:2px;background:#6699cc;opacity:.6"></div>
<div class="a" style="left:1737.29px;top:169.50px;width:1.34px;height:2px;background:#d8dee9;opacity:.6"></div>
<div class="a" style="left:1738.63px;top:169.50px;width:1.34px;height:2px;background:#5fb4b4;opacity:.6"></div>
<div class="a" style="left:1739.97px;top:169.50px;width:9.40px;height:2px;background:#99c794;opacity:.6"></div>
<div class="a" style="left:1750.72px;top:169.50px;width:2.69px;height:2px;background:#99c794;opacity:.6"></div>
<div class="a" style="left:1754.75px;top:169.50px;width:5.37px;height:2px;background:#99c794;opacity:.6"></div>
<div class="a" style="left:1760.12px;top:169.50px;width:1.34px;height:2px;background:#5fb4b4;opacity:.6"></div>
<div class="a" style="left:1761.46px;top:169.50px;width:1.34px;height:2px;background:#d8dee9;opacity:.6"></div>
<div class="a" style="left:1722.51px;top:172.50px;width:8.06px;height:2px;background:#d8dee9;opacity:.6"></div>
<div class="a" style="left:1730.57px;top:172.50px;width:1.34px;height:2px;background:#f97b58;opacity:.6"></div>
<div class="a" style="left:1733.26px;top:172.50px;width:8.06px;height:2px;background:#6699cc;opacity:.6"></div>
<div class="a" style="left:1741.32px;top:172.50px;width:1.34px;height:2px;background:#d8dee9;opacity:.6"></div>
<div class="a" style="left:1742.66px;top:172.50px;width:1.34px;height:2px;background:#5fb4b4;opacity:.6"></div>
<div class="a" style="left:1744.00px;top:172.50px;width:9.40px;height:2px;background:#99c794;opacity:.6"></div>
<div class="a" style="left:1754.75px;top:172.50px;width:2.69px;height:2px;background:#99c794;opacity:.6"></div>
<div class="a" style="left:1758.78px;top:172.50px;width:8.06px;height:2px;background:#99c794;opacity:.6"></div>
<div class="a" style="left:1766.83px;top:172.50px;width:1.34px;height:2px;background:#5fb4b4;opacity:.6"></div>
<div class="a" style="left:1768.18px;top:172.50px;width:1.34px;height:2px;background:#d8dee9;opacity:.6"></div>
<div class="a" style="left:1722.51px;top:178.50px;width:4.03px;height:2px;background:#d8dee9;opacity:.6"></div>
<div class="a" style="left:1727.89px;top:178.50px;width:1.34px;height:2px;background:#f97b58;opacity:.6"></div>
<div class="a" style="left:1730.57px;top:178.50px;width:5.37px;height:2px;background:#d8dee9;opacity:.6"></div>
<div class="a" style="left:1737.29px;top:178.50px;width:1.34px;height:2px;background:#f97b58;opacity:.6"></div>
<div class="a" style="left:1739.97px;top:178.50px;width:9.40px;height:2px;background:#d8dee9;opacity:.6"></div>
<div class="a" style="left:1750.72px;top:178.50px;width:1.34px;height:2px;background:#f97b58;opacity:.6"></div>
<div class="a" style="left:1753.40px;top:178.50px;width:9.40px;height:2px;background:#d8dee9;opacity:.6"></div>
<div class="a" style="left:1722.51px;top:184.50px;width:10.74px;height:2px;background:#6699cc;opacity:.6"></div>
<div class="a" style="left:1733.26px;top:184.50px;width:1.34px;height:2px;background:#d8dee9;opacity:.6"></div>
<div class="a" style="left:1734.60px;top:184.50px;width:1.34px;height:2px;background:#5fb4b4;opacity:.6"></div>
<div class="a" style="left:1735.94px;top:184.50px;width:2.69px;height:2px;background:#99c794;opacity:.6"></div>
<div class="a" style="left:1739.97px;top:184.50px;width:8.06px;height:2px;background:#99c794;opacity:.6"></div>
<div class="a" style="left:1749.38px;top:184.50px;width:2.69px;height:2px;background:#99c794;opacity:.6"></div>
<div class="a" style="left:1753.40px;top:184.50px;width:5.37px;height:2px;background:#99c794;opacity:.6"></div>
<div class="a" style="left:1760.12px;top:184.50px;width:10.74px;height:2px;background:#99c794;opacity:.6"></div>
<div class="a" style="left:1772.21px;top:184.50px;width:4.03px;height:2px;background:#99c794;opacity:.6"></div>
<div class="a" style="left:1777.58px;top:184.50px;width:1.34px;height:2px;background:#5fb4b4;opacity:.6"></div>
<div class="a" style="left:1780.26px;top:184.50px;width:1.34px;height:2px;background:#f97b58;opacity:.6"></div>
<div class="a" style="left:1782.95px;top:184.50px;width:5.37px;height:2px;background:#d8dee9;opacity:.6"></div>
<div class="a" style="left:1717.14px;top:193.50px;width:2.69px;height:2px;background:#5fb4b4;opacity:.6"></div>
<div class="a" style="left:1719.83px;top:193.50px;width:8.06px;height:2px;background:#ec5f67;opacity:.6"></div>
<div class="a" style="left:1727.89px;top:193.50px;width:1.34px;height:2px;background:#5fb4b4;opacity:.6"></div>
</div>
<div class="a" style="left:1904px;top:121px;width:10px;height:848px;background:#454c55;border-radius:5px 5px 3px 3px"></div>
<div class="a" style="left:1904px;top:121px;width:10px;height:466px;background:#6b7178;border-radius:5px"></div>
</body></html>
